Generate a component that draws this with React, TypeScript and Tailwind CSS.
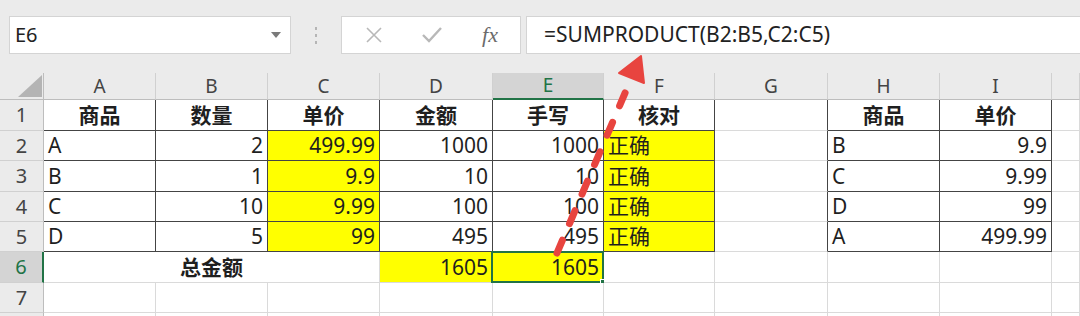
import React from "react";

type Cell = {
  t?: string;
  align?: "l" | "r" | "c";
  bold?: boolean;
  yellow?: boolean;
  span?: number;
  selected?: boolean;
};

const letters = ["A", "B", "C", "D", "E", "F", "G", "H", "I", ""];

// row heights in px, rows 1..8
const rowH = ["h-[31px]", "h-[30px]", "h-[31px]", "h-[30px]", "h-[30px]", "h-[31px]", "h-[30px]", "h-[30px]"];

const H = (t: string): Cell => ({ t, align: "c", bold: true });
const L = (t: string): Cell => ({ t, align: "l" });
const R = (t: string): Cell => ({ t, align: "r" });
const Y = (t: string, align: "l" | "r" = "r"): Cell => ({ t, align, yellow: true });
const E: Cell = {};

const rows: Cell[][] = [
  [H("商品"), H("数量"), H("单价"), H("金额"), H("手写"), H("核对"), E, H("商品"), H("单价"), E],
  [L("A"), R("2"), Y("499.99"), R("1000"), R("1000"), Y("正确", "l"), E, L("B"), R("9.9"), E],
  [L("B"), R("1"), Y("9.9"), R("10"), R("10"), Y("正确", "l"), E, L("C"), R("9.99"), E],
  [L("C"), R("10"), Y("9.99"), R("100"), R("100"), Y("正确", "l"), E, L("D"), R("99"), E],
  [L("D"), R("5"), Y("99"), R("495"), R("495"), Y("正确", "l"), E, L("A"), R("499.99"), E],
  [{ t: "总金额", align: "c", bold: true, span: 3 }, Y("1605"), { ...Y("1605"), selected: true }, E, E, E, E, E],
  [E, E, E, E, E, E, E, E, E, E],
  [E, E, E, E, E, E, E, E, E, E],
];

// bordered ranges: A1:F5 and H1:I5
const inTable = (r: number, c: number) =>
  r >= 1 && r <= 5 && ((c >= 1 && c <= 6) || (c >= 8 && c <= 9));

function GridCell({ cell, r, c }: { cell: Cell; r: number; c: number }) {
  const lastCol = c + (cell.span ?? 1) - 1;
  const darkRight = inTable(r, lastCol) || inTable(r, lastCol + 1);
  const darkBottom = inTable(r, c) || inTable(r + 1, c);
  return (
    <div
      className={`relative flex items-end border-r border-b px-[4px] pb-[1px] text-[21px] leading-[28px] text-[#1f1f1f] ${
        cell.span === 3 ? "col-span-3" : ""
      } ${darkRight ? "border-r-[#444]" : "border-r-[#dadada]"} ${
        darkBottom ? "border-b-[#444]" : "border-b-[#dadada]"
      } ${cell.yellow ? "bg-[#ffff00]" : "bg-white"} ${
        cell.align === "r" ? "justify-end" : cell.align === "c" ? "justify-center" : "justify-start"
      } ${cell.bold ? "font-bold" : ""}`}
    >
      <span className="whitespace-nowrap">{cell.t}</span>
      {cell.selected && (
        <>
          <div className="absolute left-[-2px] top-[-1px] right-[-1px] bottom-[-1px] border-2 border-[#217346]" />
          <div className="absolute right-[-4px] bottom-[-4px] w-[7px] h-[7px] bg-[#217346] border border-white" />
        </>
      )}
    </div>
  );
}

function NameBox() {
  return (
    <div className="w-[282px] h-[38px] bg-white border border-[#d4d4d4] flex items-center pl-[5px] pr-[9px]">
      <span className="flex-1 text-[20px] text-[#222]">E6</span>
      <svg width="10" height="6" viewBox="0 0 10 6">
        <path d="M0 0 L10 0 L5 6 Z" fill="#7a7a7a" />
      </svg>
    </div>
  );
}

function FormulaButtons() {
  return (
    <div className="w-[180px] h-[38px] bg-white border border-[#d4d4d4] flex items-center">
      <div className="w-[62px] flex justify-center pl-[2px]">
        <svg width="16" height="16" viewBox="0 0 16 16">
          <path d="M1 1 L15 15 M15 1 L1 15" stroke="#b8b8b8" strokeWidth="1.6" />
        </svg>
      </div>
      <div className="w-[56px] flex justify-center">
        <svg width="20" height="16" viewBox="0 0 20 16">
          <path d="M1 8 L7 14 L19 1" stroke="#b8b8b8" strokeWidth="2.4" fill="none" />
        </svg>
      </div>
      <div className="flex-1 flex justify-center">
        <span className="font-['Liberation_Serif',serif] italic text-[22px] text-[#6b6b6b] leading-none">fx</span>
      </div>
    </div>
  );
}

export default function App() {
  return (
    <div className="relative w-[1080px] h-[316px] overflow-hidden bg-[#ebebeb] font-['Noto_Sans','Noto_Sans_CJK_SC',sans-serif]">
      {/* formula bar */}
      <div className="flex items-start pt-[16px] pl-[9px] h-[73px]">
        <NameBox />
        <div className="w-[50px] h-[38px] flex flex-col items-center justify-center gap-[4px]">
          <span className="w-[2px] h-[3px] bg-[#b5b5b5]" />
          <span className="w-[2px] h-[3px] bg-[#b5b5b5]" />
          <span className="w-[2px] h-[3px] bg-[#b5b5b5]" />
        </div>
        <FormulaButtons />
        <div className="ml-[5px] flex-1 h-[38px] bg-white border border-r-0 border-[#d4d4d4] flex items-center pl-[17px]">
          <span className="text-[21px] text-[#222]">=SUMPRODUCT(B2:B5,C2:C5)</span>
        </div>
      </div>

      {/* sheet */}
      <div className="grid grid-cols-[44px_112px_112px_112px_113px_111px_111px_113px_112px_112px_1fr]">
        {/* column headers */}
        <div className="h-[27px] bg-[#ebebeb] border-r border-b border-[#bdbdbd] relative">
          <svg className="absolute left-[18px] top-[2px]" width="24" height="22" viewBox="0 0 24 22">
            <path d="M24 0 L24 22 L0 22 Z" fill="#b4b4b4" />
          </svg>
        </div>
        {letters.map((l, i) => (
          <div
            key={i}
            className={`h-[27px] flex items-center justify-center text-[19px] border-r border-r-[#d0d0d0] ${
              l === "E"
                ? "bg-[#d4d4d4] text-[#217346] border-b-2 border-b-[#217346]"
                : "bg-[#ebebeb] text-[#444] border-b border-b-[#bdbdbd]"
            }`}
          >
            {l}
          </div>
        ))}

        {rows.map((row, ri) => {
          const r = ri + 1;
          let c = 1;
          return (
            <React.Fragment key={r}>
              <div
                className={`${rowH[ri]} flex items-center justify-center text-[20px] border-b border-b-[#d0d0d0] ${
                  r === 6
                    ? "bg-[#d4d4d4] text-[#217346] border-r-2 border-r-[#217346]"
                    : "bg-[#ebebeb] text-[#444] border-r border-r-[#bdbdbd]"
                }`}
              >
                {r < 8 ? r : ""}
              </div>
              {row.map((cell, ci) => {
                const col = c;
                c += cell.span ?? 1;
                return <GridCell key={ci} cell={cell} r={r} c={col} />;
              })}
            </React.Fragment>
          );
        })}
      </div>

      {/* red dashed arrow pointing at the formula */}
      <svg className="absolute inset-0 pointer-events-none" width="1080" height="316" viewBox="0 0 1080 316">
        <line
          x1="557"
          y1="253"
          x2="628"
          y2="86"
          stroke="#e8443f"
          strokeWidth="7"
          strokeDasharray="14 18"
          strokeLinecap="round"
        />
        <path d="M641 56 L619 73 L644 83 Z" fill="#e8443f" stroke="#e8443f" strokeWidth="2" strokeLinejoin="round" />
      </svg>
    </div>
  );
}
